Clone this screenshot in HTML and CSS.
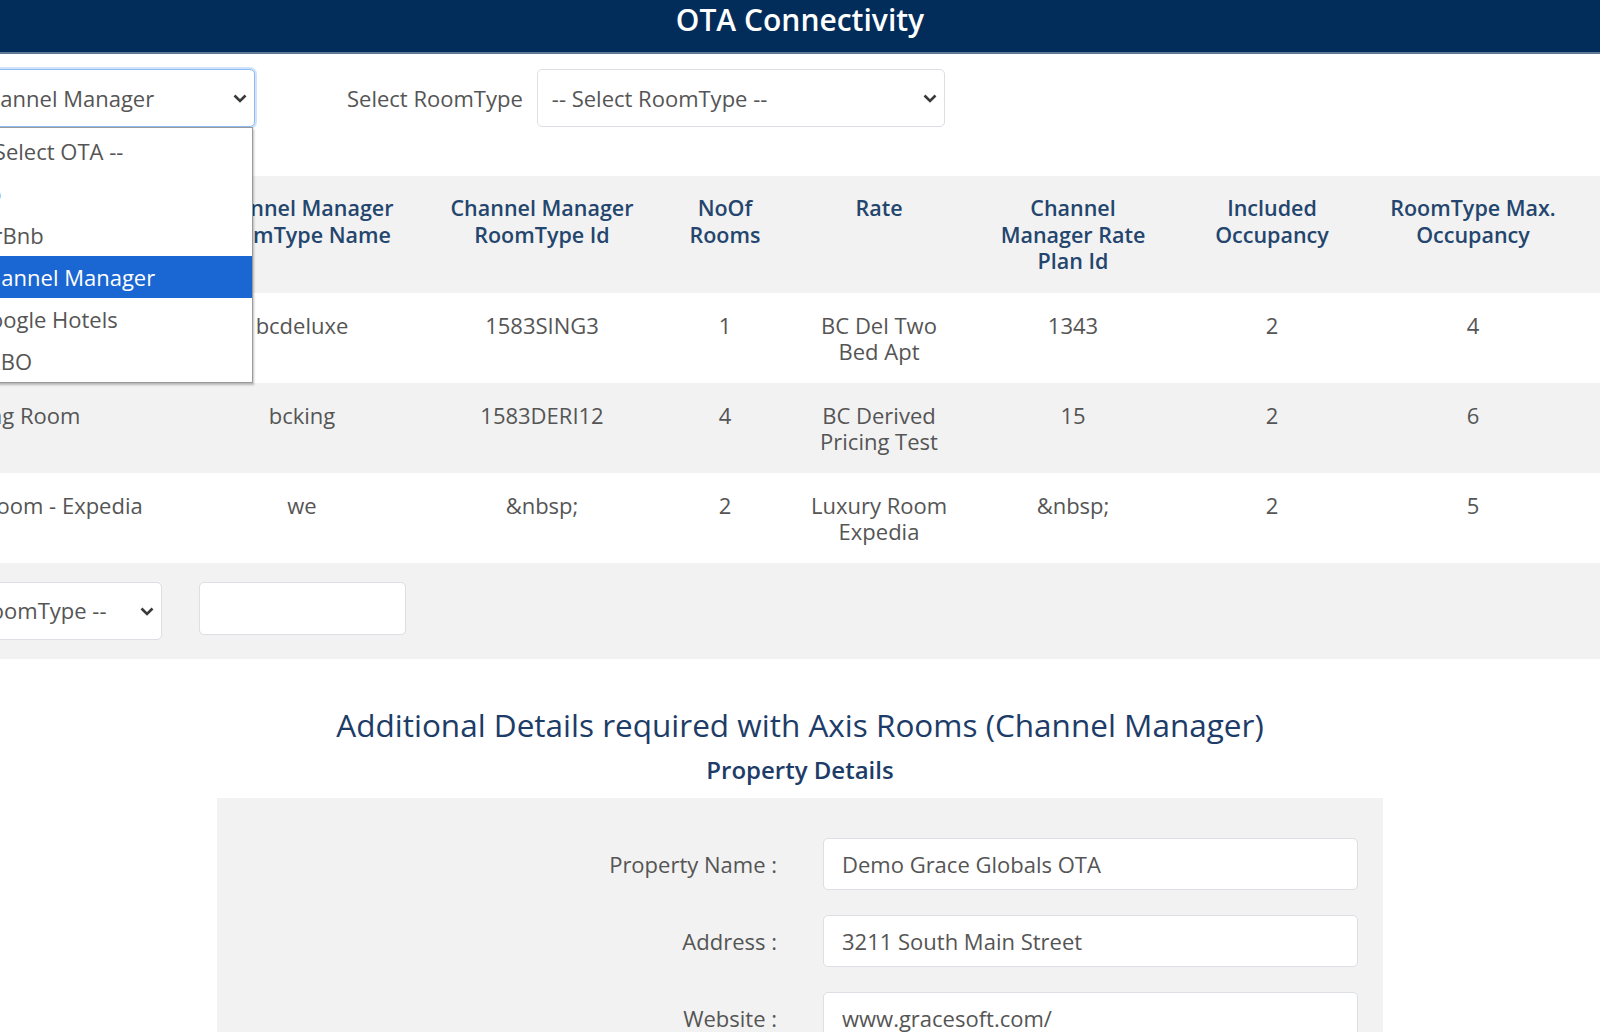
FILE: index.html
```html
<!DOCTYPE html>
<html lang="en">
<head>
    <meta charset="UTF-8">
    <meta name="viewport" content="width=device-width, initial-scale=1.0">
    <title>OTA Connectivity</title>
    <link rel="stylesheet" href="styles.css">
</head>
<body>
    <header class="page-header">
        <h1>OTA Connectivity</h1>
    </header>
    <main>
        <!-- Mapping of room types -->
        <section class="mapping">
            <div class="filter-row">
                <div class="ota-picker">
                    <div class="select-wrap">
                        <select class="form-select ota-select">
                            <option>Channel Manager</option>
                        </select>
                        <svg class="chevron" width="14" height="9" viewBox="0 0 14 9"><path d="M1.5 1.5 L7 7 L12.5 1.5" fill="none" stroke="#3a3a3a" stroke-width="2.6"/></svg>
                    </div>
                    <ul class="ota-menu">
                        <li>-- Select OTA --</li>
                        <li>Ab</li>
                        <li>AirBnb</li>
                        <li class="selected">Channel Manager</li>
                        <li>Google Hotels</li>
                        <li>VRBO</li>
                    </ul>
                </div>
                <label class="filter-label" for="roomType">Select RoomType</label>
                <div class="select-wrap">
                    <select class="form-select roomtype-select" id="roomType">
                        <option>-- Select RoomType --</option>
                    </select>
                    <svg class="chevron" width="14" height="9" viewBox="0 0 14 9"><path d="M1.5 1.5 L7 7 L12.5 1.5" fill="none" stroke="#3a3a3a" stroke-width="2.6"/></svg>
                </div>
            </div>

            <table class="mapping-table">
                <colgroup>
                    <col style="width: 294px">
                    <col style="width: 260px">
                    <col style="width: 220px">
                    <col style="width: 146px">
                    <col style="width: 162px">
                    <col style="width: 226px">
                    <col style="width: 172px">
                    <col style="width: 230px">
                    <col style="width: 200px">
                </colgroup>
                <thead>
                    <tr>
                        <th>RoomType<br>Name</th>
                        <th>Channel Manager<br>RoomType Name</th>
                        <th>Channel Manager<br>RoomType Id</th>
                        <th>NoOf<br>Rooms</th>
                        <th>Rate</th>
                        <th>Channel<br>Manager Rate<br>Plan Id</th>
                        <th>Included<br>Occupancy</th>
                        <th>RoomType Max.<br>Occupancy</th>
                        <th>Action</th>
                    </tr>
                </thead>
                <tbody>
                    <tr>
                        <td>Deluxe Room</td>
                        <td>bcdeluxe</td>
                        <td>1583SING3</td>
                        <td>1</td>
                        <td>BC Del Two<br>Bed Apt</td>
                        <td>1343</td>
                        <td>2</td>
                        <td>4</td>
                        <td>Delete</td>
                    </tr>
                    <tr>
                        <td>King Room</td>
                        <td>bcking</td>
                        <td>1583DERI12</td>
                        <td>4</td>
                        <td>BC Derived<br>Pricing Test</td>
                        <td>15</td>
                        <td>2</td>
                        <td>6</td>
                        <td>Delete</td>
                    </tr>
                    <tr>
                        <td>Luxury Room - Expedia</td>
                        <td>we</td>
                        <td>&amp;nbsp;</td>
                        <td>2</td>
                        <td>Luxury Room<br>Expedia</td>
                        <td>&amp;nbsp;</td>
                        <td>2</td>
                        <td>5</td>
                        <td>Delete</td>
                    </tr>
                    <tr class="add-row">
                        <td class="add-type">
                            <div class="select-wrap">
                                <select class="form-select add-select">
                                    <option>-- Select RoomType --</option>
                                </select>
                                <svg class="chevron" width="14" height="9" viewBox="0 0 14 9"><path d="M1.5 1.5 L7 7 L12.5 1.5" fill="none" stroke="#3a3a3a" stroke-width="2.6"/></svg>
                            </div>
                        </td>
                        <td><input type="text" class="form-input add-input"></td>
                        <td></td>
                        <td></td>
                        <td></td>
                        <td></td>
                        <td></td>
                        <td></td>
                        <td></td>
                    </tr>
                </tbody>
            </table>
        </section>

        <!-- Extra details for the channel manager -->
        <section class="details">
            <h2>Additional Details required with Axis Rooms (Channel Manager)</h2>
            <h3>Property Details</h3>
            <div class="details-box">
                <label for="propName">Property Name :</label>
                <input type="text" class="form-input" id="propName" value="Demo Grace Globals OTA">
                <label for="propAddress">Address :</label>
                <input type="text" class="form-input" id="propAddress" value="3211 South Main Street">
                <label for="propWebsite">Website :</label>
                <input type="text" class="form-input" id="propWebsite" value="www.gracesoft.com/">
                <label for="propPhone">Phone :</label>
                <input type="text" class="form-input" id="propPhone" value="">
            </div>
        </section>
    </main>
</body>
</html>
```

FILE: styles.css
```css
body {
    margin: 0;
    font-family: "Open Sans", "Liberation Sans", sans-serif;
    font-size: 22px;
    color: #555;
    background: #fff;
    overflow-x: hidden;
}

.page-header {
    height: 52px;
    background-color: #022c5a;
    border-bottom: 2px solid #5f7996;
    text-align: center;
}

.page-header h1 {
    margin: 0;
    font-size: 30px;
    font-weight: 600;
    line-height: 40px;
    color: #fff;
}

/* selects / inputs */
.select-wrap {
    position: relative;
    display: inline-block;
}

.select-wrap .chevron {
    position: absolute;
    right: 8px;
    top: 50%;
    margin-top: -4px;
    pointer-events: none;
}

.form-select,
.form-input {
    box-sizing: border-box;
    font: inherit;
    color: #555;
    background-color: #fff;
    border: 1px solid #dcdfe3;
    border-radius: 5px;
}

.form-select {
    display: block;
    height: 58px;
    padding: 0 30px 0 14px;
    appearance: none;
    -webkit-appearance: none;
}

.form-input {
    height: 53px;
    padding: 0 18px;
}

/* top filters */
.mapping {
    margin-left: -124px;
    width: 1910px;
}

.filter-row {
    display: flex;
    align-items: center;
    margin-top: 15px;
    padding-left: 86px;
}

.ota-picker {
    position: relative;
    margin-right: 92px;
}

.ota-select {
    width: 293px;
    padding-left: 10px;
    border-color: #8dbcf2;
    box-shadow: 0 0 0 2px rgba(70, 145, 235, 0.25);
    outline: none;
}

.ota-menu {
    position: absolute;
    top: 100%;
    left: 0;
    right: 2px;
    margin: 0;
    padding: 2px 0 0;
    list-style: none;
    background: #fff;
    border: 1px solid #9a9a9a;
    box-shadow: 1px 2px 2px rgba(0, 0, 0, 0.25);
    z-index: 10;
}

.ota-menu li {
    height: 42px;
    line-height: 42px;
    padding-left: 11px;
    white-space: nowrap;
}

.ota-menu li.selected {
    background-color: #1a66d2;
    color: #fff;
}

.filter-label {
    margin-right: 14px;
}

.roomtype-select {
    width: 408px;
}

/* mapping table */
.mapping-table {
    margin-top: 49px;
    margin-left: 2px;
    width: 1910px;
    table-layout: fixed;
    border-collapse: collapse;
}

.mapping-table th,
.mapping-table td {
    padding: 19px 12px 18px;
    text-align: center;
    vertical-align: top;
    line-height: 26.5px;
    white-space: nowrap;
}

.mapping-table th {
    background-color: #f2f2f2;
    color: #24466e;
    font-size: 21.5px;
    font-weight: 600;
}

.mapping-table tbody tr:nth-child(even) {
    background-color: #f2f2f2;
}

.mapping-table .add-row td {
    padding-bottom: 19px;
}

.mapping-table .add-row td.add-type {
    text-align: left;
}

.add-type .select-wrap {
    margin-left: -14px;
}

.add-select {
    width: 286px;
}

.add-input {
    width: 207px;
}

/* additional details */
.details {
    padding-top: 46px;
    text-align: center;
}

.details h2 {
    margin: 0;
    font-size: 31.5px;
    font-weight: 400;
    line-height: 40px;
    color: #1d3c68;
}

.details h3 {
    margin: 9px 0 12px;
    font-size: 24px;
    font-weight: 600;
    line-height: 32px;
    color: #1d3c68;
}

.details-box {
    box-sizing: border-box;
    width: 1166px;
    margin: 0 auto;
    padding: 40px 25px 40px 0;
    display: grid;
    grid-template-columns: 1fr 535px;
    column-gap: 46px;
    row-gap: 25px;
    align-items: center;
    background-color: #f2f2f2;
    text-align: left;
}

.details-box label {
    text-align: right;
}

.details-box .form-input {
    width: 100%;
    height: 52px;
}
```
